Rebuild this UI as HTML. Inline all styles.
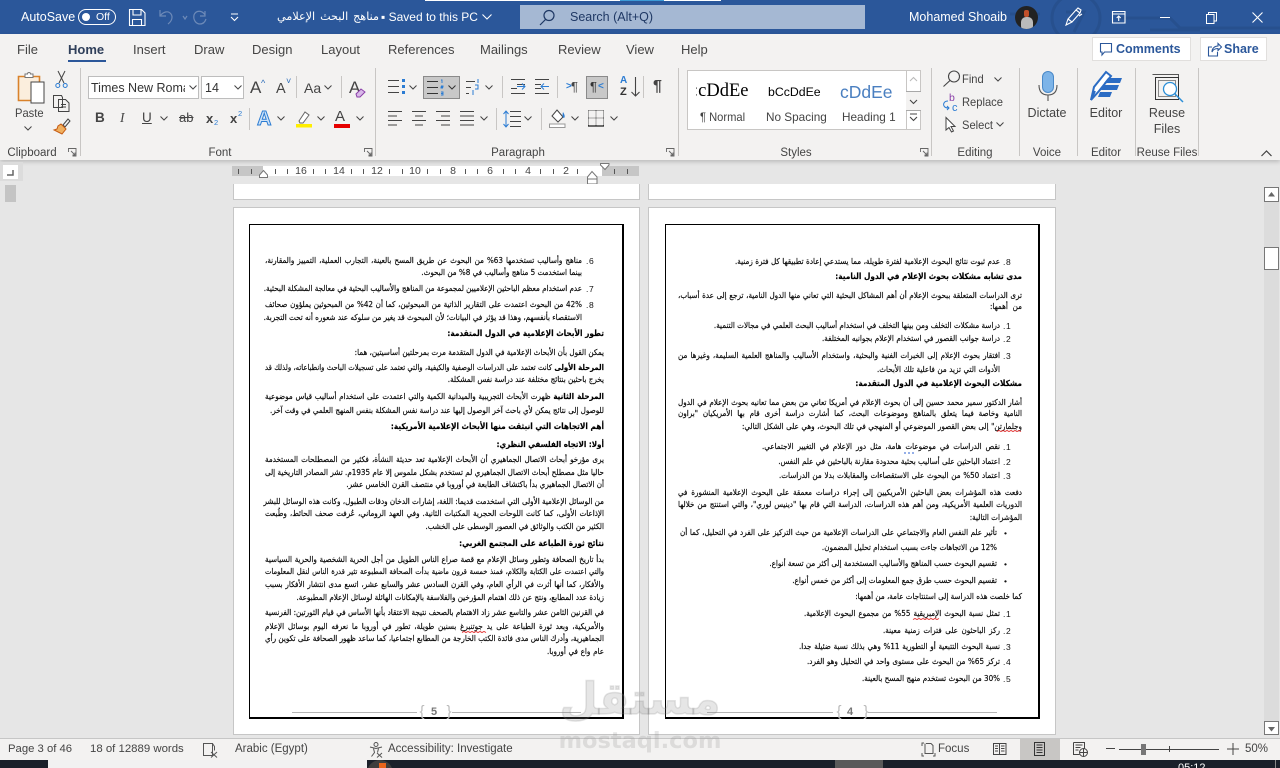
<!DOCTYPE html>
<html lang="en"><head><meta charset="utf-8"><title>Word</title>
<style>
html,body{margin:0;padding:0;width:1280px;height:768px;overflow:hidden;background:#e6e6e6;font-family:"Liberation Sans","DejaVu Sans",sans-serif}
div,span{position:absolute;box-sizing:border-box}
.t{white-space:nowrap;color:#444;font-size:12.5px;line-height:14px}
.nr{font-size:12px;transform:scaleX(.93);transform-origin:left center}
.c{transform:translateX(-50%)}
svg{position:absolute;overflow:visible}
.tab{top:42px;font-size:13px;color:#444;white-space:nowrap;line-height:15px}
.sep{width:1px;background:#c8c6c4}
.lbl{top:146px;font-size:11.5px;color:#444;line-height:14px;white-space:nowrap;transform:translateX(-50%)}
.l{direction:rtl;white-space:nowrap;text-align:justify;text-align-last:justify;font:7.2px/10px "DejaVu Sans",sans-serif;color:#000;height:10px;-webkit-text-stroke:.14px #000;transform:scaleY(1.12)}
.l b{font-weight:bold;color:#000}
.h{font-weight:bold;color:#000;font-size:7.4px}
.n{font:8.5px/10px "Liberation Sans",sans-serif;color:#111;white-space:nowrap;letter-spacing:.6px}
.page{background:#fff;border:1px solid #c6c6c6}
.fr{border:1px solid #000;border-right-width:2px;border-bottom-width:2px}
</style></head><body>

<!-- title bar -->
<div style="left:0;top:0;width:1280px;height:34px;background:#2b579a"></div>
<svg style="left:1030px;top:0" width="250" height="34"><g fill="none" stroke="#27508e" stroke-width="3"><circle cx="46" cy="18" r="24"/><path d="M36 12h18l-10 20M90 18h50l10 10h100M120 30h50M10 14h-30"/></g></svg>
<div style="left:425px;top:0;width:195px;height:1px;background:#fff"></div>
<div style="left:620px;top:0;width:44px;height:1px;background:#3c9ad6"></div>
<div style="left:664px;top:0;width:57px;height:1px;background:#fff"></div>
<div class="t" style="left:21px;top:10px;color:#fff;font-size:12.5px">AutoSave</div>
<div style="left:78px;top:9px;width:38px;height:16px;border:1.3px solid #fff;border-radius:8px"></div>
<div style="left:82px;top:13px;width:8px;height:8px;background:#fff;border-radius:50%"></div>
<div class="t" style="left:96px;top:10px;color:#fff;font-size:10.5px">Off</div>
<svg style="left:129px;top:9px" width="17" height="17" fill="none" stroke="#fff" stroke-width="1.1"><path d="M.5.5h12l3.5 3.5v12.500h-15.500zM4 .5v5.500h8v-5.500M3.500 16.500v-6h9v6"/></svg>
<svg style="left:159px;top:9px" width="50" height="17" fill="none" stroke="#6d8ab8" stroke-width="1.2"><path d="M1 1v6h6M1 7c3-4 8-6 11-2 2 3 1 7-3 10"/><path d="M37 7l2 3 2-3" transform="translate(-13 0)"/><path d="M46 2v5h-5M46 6c-3-5-9-5-11 0-1 5 2 9 6 9 3 0 5-2 6-5"/></svg>
<svg style="left:230px;top:13px" width="9" height="9" fill="none" stroke="#fff" stroke-width="1.1"><path d="M1 1h7M1 4l3.500 3.500L8 4"/></svg>
<div class="t" dir="rtl" style="left:277px;top:10px;width:102px;color:#fff;font:11.2px/14px 'DejaVu Sans',sans-serif;text-align-last:justify">مناهج البحث الإعلامي</div>
<div class="t" style="left:381px;top:10px;color:#fff;font-size:12px">▪ Saved to this PC</div>
<svg style="left:482px;top:14px" width="10" height="7" fill="none" stroke="#fff" stroke-width="1.1"><path d="M.5.500l4.500 4.500 4.500-4.500"/></svg>
<div style="left:520px;top:5px;width:345px;height:24px;background:#a5b8d3"></div>
<svg style="left:539px;top:9px" width="17" height="17" fill="none" stroke="#1f3864" stroke-width="1.2"><circle cx="10" cy="6.500" r="5"/><path d="M6.500 10.500L1 16"/></svg>
<div class="t" style="left:570px;top:10px;color:#1f3864;font-size:12.500px">Search (Alt+Q)</div>
<div class="t" style="left:909px;top:10px;color:#fff;font-size:12.500px">Mohamed Shoaib</div>
<div style="left:1015px;top:6px;width:23px;height:23px;border-radius:50%;background:#222;overflow:hidden"><div style="left:6px;top:11px;width:12px;height:14px;background:#bbb;border-radius:5px"></div><div style="left:9px;top:4px;width:5px;height:7px;background:#c2502a;border-radius:2px"></div></div>
<svg style="left:1065px;top:8px" width="18" height="19" fill="none" stroke="#fff" stroke-width="1.1"><path d="M1 17l2-6 8-9 4 3-8 9zM3 11l4 3M11 2l2-2 3 2-1 3M14 8l3-2"/></svg>
<svg style="left:1112px;top:11px" width="14" height="14" fill="none" stroke="#fff" stroke-width="1.1"><path d="M.500.500h12.500v11.500h-12.500zM.500 3h12.500M6.700 10V5M4.700 7l2-2 2 2"/></svg>
<div style="left:1160px;top:17px;width:10px;height:1px;background:#fff"></div>
<svg style="left:1206px;top:12px" width="11" height="12" fill="none" stroke="#fff" stroke-width="1"><path d="M.500 2.500h7.500v9h-7.500zM2.500 2.500v-2h8v8.500h-2.500"/></svg>
<svg style="left:1252px;top:12px" width="11" height="11" fill="none" stroke="#fff" stroke-width="1.1"><path d="M.500.500l10 10M10.500.500l-10 10"/></svg>

<!-- ribbon -->
<div style="left:0;top:34px;width:1280px;height:126px;background:#f3f2f1;box-shadow:0 2px 4px rgba(0,0,0,.18)"></div>
<div class="tab" style="left:17px">File</div>
<div class="tab" style="left:68px;font-weight:bold;color:#2f3f5a">Home</div>
<div style="left:68px;top:60px;width:38px;height:2px;background:#2b579a"></div>
<div class="tab" style="left:133px">Insert</div>
<div class="tab" style="left:194px">Draw</div>
<div class="tab" style="left:252px">Design</div>
<div class="tab" style="left:321px">Layout</div>
<div class="tab" style="left:388px">References</div>
<div class="tab" style="left:480px">Mailings</div>
<div class="tab" style="left:558px">Review</div>
<div class="tab" style="left:626px">View</div>
<div class="tab" style="left:681px">Help</div>

<div style="left:1092px;top:37px;width:99px;height:24px;background:#fff;border:1px solid #e1dfdd"></div>
<svg style="left:1100px;top:43px" width="14" height="14" fill="none" stroke="#2b579a" stroke-width="1.100"><path d="M.500.500h11v8.500h-7l-2.500 3v-3h-1.500z"/></svg>
<div class="t" style="left:1116px;top:42px;color:#2b579a;font-weight:bold;font-size:12.500px">Comments</div>
<div style="left:1200px;top:37px;width:67px;height:24px;background:#fff;border:1px solid #e1dfdd"></div>
<svg style="left:1208px;top:43px" width="14" height="14" fill="none" stroke="#2b579a" stroke-width="1.100"><path d="M4 4H.500v9h9v-4M4 9c0-4 3-6 6-6V.500l3.500 3.500L10 7.500V5.500c-3 0-5 1-6 3.500z"/></svg>
<div class="t" style="left:1224px;top:42px;color:#2b579a;font-weight:bold;font-size:12.500px">Share</div>

<div class="sep" style="left:80px;top:68px;height:88px"></div>
<div class="sep" style="left:375px;top:68px;height:88px"></div>
<div class="sep" style="left:678px;top:68px;height:88px"></div>
<div class="sep" style="left:931px;top:68px;height:88px"></div>
<div class="sep" style="left:1019px;top:68px;height:88px"></div>
<div class="sep" style="left:1077px;top:68px;height:88px"></div>
<div class="sep" style="left:1135px;top:68px;height:88px"></div>
<div class="sep" style="left:1198px;top:68px;height:88px"></div>

<!-- clipboard -->
<svg style="left:17px;top:71px" width="30" height="32" fill="none"><path d="M1.500 5.500h21v24h-21z" stroke="#d9822b" stroke-width="1.600" fill="#fbeedd"/><path d="M8 5V3h2.500a1.500 1.500 0 013 0H16v3.500H8z" stroke="#777" fill="#fff"/><path d="M14 12h13v21H14z" stroke="#444" fill="#fff" transform="translate(0 -1)"/></svg>
<div class="t nr" style="left:15px;top:106px">Paste</div>
<svg style="left:24px;top:126px" width="8" height="5" fill="none" stroke="#444"><path d="M.500.500L4 4 7.500.500"/></svg>
<svg style="left:55px;top:71px" width="13" height="18" fill="none" stroke="#444" stroke-width="1"><path d="M3 0l6 12M10 0L4 12"/><circle cx="2.800" cy="14.500" r="2" stroke="#2b7cd3"/><circle cx="10.200" cy="14.500" r="2" stroke="#2b7cd3"/></svg>
<svg style="left:53px;top:95px" width="17" height="17" fill="none" stroke="#444"><path d="M.500.500h8l1 2v10h-9zM5.500 4.500h7l3.500 3.500v8.500h-10.500zM8 9.500h5M8 12h5"/></svg>
<svg style="left:53px;top:118px" width="17" height="17" fill="none"><path d="M10 7l5-6 2 2-5 6z" stroke="#444"/><path d="M8 6l5 5-4 5-8-4 3-1 1-3z" fill="#f0b060" stroke="#c55a11"/></svg>
<div class="lbl" style="left:32px">Clipboard</div>
<svg style="left:68px;top:148px" width="9" height="9" fill="none" stroke="#666" stroke-width=".9"><path d="M.500 4V.500H8v7.500H4.500M3 3l4 4M4.500 7H7V4.500"/></svg>

<!-- font -->
<div style="left:88px;top:76px;width:111px;height:23px;background:#fff;border:1px solid #bdbdbd"></div>
<div style="left:201px;top:76px;width:43px;height:23px;background:#fff;border:1px solid #bdbdbd"></div>
<div class="t" style="left:91px;top:81px;width:94px;overflow:hidden;color:#333;font-size:12.500px">Times New Roma</div>
<div class="t" style="left:205px;top:81px;color:#333;font-size:12.500px">14</div>
<svg style="left:189px;top:85px" width="8" height="5" fill="none" stroke="#444"><path d="M.500.500L4 4 7.500.500"/></svg>
<svg style="left:234px;top:85px" width="8" height="5" fill="none" stroke="#444"><path d="M.500.500L4 4 7.500.500"/></svg>
<div class="t" style="left:250px;top:78px;font-size:17px;line-height:20px">A</div><div class="t" style="left:261px;top:76px;font-size:9px;color:#2b6cb8">^</div>
<div class="t" style="left:276px;top:80px;font-size:14.500px;line-height:18px">A</div><div class="t" style="left:286px;top:74px;font-size:9px;color:#2b6cb8">˅</div>
<div class="sep" style="left:296px;top:76px;height:22px"></div>
<div class="t" style="left:304px;top:80px;font-size:14px;line-height:16px">Aa</div>
<svg style="left:324px;top:85px" width="8" height="5" fill="none" stroke="#444"><path d="M.500.500L4 4 7.500.500"/></svg>
<div class="sep" style="left:341px;top:76px;height:22px"></div>
<div class="t" style="left:349px;top:78px;font-size:17px;line-height:20px">A</div>
<svg style="left:355px;top:88px" width="11" height="10"><path d="M1 6l5-5 4 3-5 5H2z" fill="#d8b8e8" stroke="#8a3fa8"/></svg>

<div class="t" style="left:95px;top:110px;font-weight:bold;font-size:13.500px;line-height:16px">B</div>
<div class="t" style="left:120px;top:110px;font-style:italic;font-size:13.500px;line-height:16px;font-family:'Liberation Serif',serif">I</div>
<div class="t" style="left:142px;top:110px;text-decoration:underline;font-size:13.500px;line-height:16px">U</div>
<svg style="left:160px;top:116px" width="8" height="5" fill="none" stroke="#444"><path d="M.500.500L4 4 7.500.500"/></svg>
<div class="t" style="left:179px;top:110px;font-size:13px;line-height:16px;text-decoration:line-through">ab</div>
<div class="t" style="left:206px;top:111px;font-size:13px;font-weight:bold;line-height:15px">x</div><div class="t" style="left:214px;top:119px;font-size:7.500px;line-height:8px;color:#2b7cd3">2</div>
<div class="t" style="left:230px;top:111px;font-size:13px;font-weight:bold;line-height:15px">x</div><div class="t" style="left:238px;top:110px;font-size:7.500px;line-height:8px;color:#2b7cd3">2</div>
<div class="sep" style="left:249px;top:108px;height:22px"></div>
<div class="t" style="left:257px;top:108px;font-size:20px;line-height:22px;font-weight:bold;color:#cfe3f7;-webkit-text-stroke:1px #2b7cd3">A</div>
<svg style="left:277px;top:116px" width="8" height="5" fill="none" stroke="#444"><path d="M.500.500L4 4 7.500.500"/></svg>
<svg style="left:296px;top:110px" width="16" height="17"><path d="M3 11l6-9 4 3-6 8H4z" fill="#fff" stroke="#666"/><path d="M0 14h16v3.500H0z" fill="#ffee00"/></svg>
<svg style="left:317px;top:116px" width="8" height="5" fill="none" stroke="#444"><path d="M.500.500L4 4 7.500.500"/></svg>
<div class="t" style="left:335px;top:109px;font-size:15px;line-height:16px">A</div><div style="left:334px;top:124px;width:16px;height:3.500px;background:#e60000"></div>
<svg style="left:356px;top:116px" width="8" height="5" fill="none" stroke="#444"><path d="M.500.500L4 4 7.500.500"/></svg>
<div class="lbl" style="left:220px">Font</div>
<svg style="left:364px;top:148px" width="9" height="9" fill="none" stroke="#666" stroke-width=".9"><path d="M.500 4V.500H8v7.500H4.500M3 3l4 4M4.500 7H7V4.500"/></svg>

<!-- paragraph -->
<svg style="left:388px;top:79px" width="18" height="16" stroke="#444" fill="none"><path d="M0 1.500h11M0 7.500h11M0 13.500h11"/><path d="M14 0h3v3h-3zM14 6h3v3h-3zM14 12h3v3h-3z" fill="#2b7cd3" stroke="none"/></svg>
<svg style="left:409px;top:85px" width="8" height="5" fill="none" stroke="#444"><path d="M.500.500L4 4 7.500.500"/></svg>
<div style="left:423px;top:76px;width:37px;height:23px;background:#c8c8c8;border:1px solid #8a8a8a"></div>
<svg style="left:427px;top:79px" width="17" height="17" stroke="#333" fill="none"><path d="M0 2.500h11M0 8.500h11M0 14.500h11"/><path d="M14 1h1v3M14 7h2v1h-2v1h2M14 13h2v3h-2M14 14.500h2" stroke="#2b7cd3" stroke-width=".9"/></svg>
<svg style="left:448px;top:85px" width="8" height="5" fill="none" stroke="#333"><path d="M.500.500L4 4 7.500.500"/></svg>
<svg style="left:466px;top:79px" width="16" height="17" stroke="#444" fill="none"><path d="M0 2.500h9M0 8.500h5M0 14.500h3"/><path d="M12 0v4M9 6h3v4H9M7 11v5" stroke="#2b7cd3"/></svg>
<svg style="left:485px;top:85px" width="8" height="5" fill="none" stroke="#444"><path d="M.500.500L4 4 7.500.500"/></svg>
<div class="sep" style="left:502px;top:76px;height:22px"></div>
<svg style="left:511px;top:79px" width="15" height="15" stroke="#444" fill="none"><path d="M0 .500h14M6 5.500h8M0 14.500h14M0 9.500h6"/><path d="M5 7.500h8M10 4.500l3 3-3 3" stroke="#2b7cd3" transform="translate(1 0)"/></svg>
<svg style="left:535px;top:79px" width="15" height="15" stroke="#444" fill="none"><path d="M0 .500h14M0 5.500h6M0 14.500h14M0 9.500h6"/><path d="M14 7.500H6M9 4.500l-3 3 3 3" stroke="#2b7cd3"/></svg>
<div class="sep" style="left:557px;top:76px;height:22px"></div>
<div class="t" style="left:571px;top:79px;font-size:13px;line-height:16px">¶</div><div class="t" style="left:566px;top:80px;font-size:10px;color:#2b7cd3;font-weight:bold">&gt;</div>
<div style="left:586px;top:76px;width:22px;height:23px;background:#c8c8c8;border:1px solid #8a8a8a"></div>
<div class="t" style="left:590px;top:79px;font-size:13px;line-height:16px;color:#333">¶</div><div class="t" style="left:598px;top:80px;font-size:10px;color:#2b7cd3;font-weight:bold">&lt;</div>
<div class="t" style="left:620px;top:76px;font-size:10px;line-height:10px;color:#2b7cd3;font-weight:bold">A</div><div class="t" style="left:620px;top:87px;font-size:11px;line-height:11px;color:#333;font-weight:bold">Z</div>
<svg style="left:631px;top:77px" width="9" height="20" fill="none" stroke="#444" stroke-width="1.100"><path d="M4.500 0v19M.500 15l4 4 4-4"/></svg>
<div class="sep" style="left:643px;top:76px;height:22px"></div>
<div class="t" style="left:653px;top:78px;font-size:16px;line-height:18px;font-weight:bold;color:#444">¶</div>

<svg style="left:388px;top:111px" width="90" height="15" stroke="#444" fill="none"><path d="M0 .500h14M0 5h9M0 9.500h14M0 14h9"/><path d="M24 .500h14M27 5h8M24 9.500h14M27 14h8"/><path d="M48 .500h14M53 5h9M48 9.500h14M53 14h9"/><path d="M72 .500h14M72 5h14M72 9.500h14M72 14h14"/></svg>
<svg style="left:480px;top:116px" width="8" height="5" fill="none" stroke="#444"><path d="M.500.500L4 4 7.500.500"/></svg>
<div class="sep" style="left:496px;top:108px;height:22px"></div>
<svg style="left:503px;top:110px" width="18" height="18" fill="none"><path d="M7 1.500h11M7 6.500h11M7 11.500h11M7 16.500h11" stroke="#444"/><path d="M3 1v16M.500 4L3 1l2.500 3M.500 14L3 17l2.500-3" stroke="#2b7cd3"/></svg>
<svg style="left:524px;top:116px" width="8" height="5" fill="none" stroke="#444"><path d="M.500.500L4 4 7.500.500"/></svg>
<div class="sep" style="left:541px;top:108px;height:22px"></div>
<svg style="left:549px;top:109px" width="17" height="19" fill="none"><path d="M8 1l6 7-5 5-6-6z" stroke="#444" fill="#fff"/><path d="M14 3c2 3 2 5 1 6-1 0-2-2-1-6z" fill="#2b7cd3"/><path d="M.500 15h15.500v3.500H.500z" stroke="#999" fill="#fff"/></svg>
<svg style="left:571px;top:116px" width="8" height="5" fill="none" stroke="#444"><path d="M.500.500L4 4 7.500.500"/></svg>
<svg style="left:588px;top:110px" width="16" height="17" fill="none"><path d="M.500.500h15M.500 8h15M8 .500v15M.500.500v15M15.500.500v15" stroke="#555" stroke-dasharray="1 1"/><path d="M0 16h16" stroke="#222" stroke-width="1.300"/></svg>
<svg style="left:610px;top:116px" width="8" height="5" fill="none" stroke="#444"><path d="M.500.500L4 4 7.500.500"/></svg>
<div class="lbl" style="left:518px">Paragraph</div>
<svg style="left:666px;top:148px" width="9" height="9" fill="none" stroke="#666" stroke-width=".9"><path d="M.500 4V.500H8v7.500H4.500M3 3l4 4M4.500 7H7V4.500"/></svg>

<!-- styles -->
<div style="left:687px;top:70px;width:234px;height:60px;background:#fff;border:1px solid #c8c6c4"></div>
<div style="left:906px;top:70px;width:15px;height:60px;border:1px solid #c8c6c4;background:#fff"></div>
<div style="left:906px;top:91px;width:15px;height:20px;border:1px solid #a8a8a8;border-width:1px 0;background:#f3f2f1"></div>
<svg style="left:909px;top:76px" width="9" height="48" fill="none" stroke-width="1.100"><path d="M1 5l3.500-3.500L8 5" stroke="#bbb"/><path d="M1 24l3.500 3.500L8 24M1 38h7M1 41l3.500 3.500L8 41" stroke="#444"/></svg>
<div style="left:696px;top:79px;width:54px;height:24px;overflow:hidden"><div class="t" style="left:-3px;top:2px;font:18.5px/20px 'Liberation Serif',serif;color:#000">:cDdEe</div></div>
<div class="t" style="left:768px;top:85px;font:12.300px/14px 'Liberation Sans',sans-serif;color:#000">bCcDdEe</div>
<div class="t" style="left:840px;top:81px;font:17.500px/22px 'Liberation Sans',sans-serif;color:#4a7fc0">cDdEe</div>
<div class="t nr" style="left:700px;top:110px">¶ Normal</div>
<div class="t nr" style="left:766px;top:110px;transform:scaleX(.98)">No Spacing</div>
<div class="t nr" style="left:842px;top:110px;transform:scaleX(.98)">Heading 1</div>
<div class="lbl" style="left:796px">Styles</div>
<svg style="left:920px;top:148px" width="9" height="9" fill="none" stroke="#666" stroke-width=".9"><path d="M.500 4V.500H8v7.500H4.500M3 3l4 4M4.500 7H7V4.500"/></svg>

<!-- editing -->
<svg style="left:943px;top:70px" width="18" height="17" fill="none" stroke="#444" stroke-width="1.100"><circle cx="11" cy="6.500" r="5.500"/><path d="M7 10.500L.500 16.500"/></svg>
<div class="t nr" style="left:962px;top:72px">Find</div>
<svg style="left:994px;top:77px" width="8" height="5" fill="none" stroke="#444"><path d="M.500.500L4 4 7.500.500"/></svg>
<svg style="left:942px;top:93px" width="17" height="18" fill="none"><path d="M6 8c-4 0-5 3-4 5 1 2 3 2 5 2M5 13l2 2-2 2" stroke="#2b7cd3"/></svg>
<div class="t" style="left:949px;top:93px;font-size:10.500px;line-height:11px;color:#8a3fa8">b</div>
<div class="t" style="left:952px;top:103px;font-size:11px;line-height:11px;color:#2b7cd3">c</div>
<div class="t nr" style="left:962px;top:95px">Replace</div>
<svg style="left:945px;top:117px" width="12" height="16" fill="#fff" stroke="#444"><path d="M1 .500v12.500l3-2.500 2.500 4.500 2-1-2.500-4.500h4z"/></svg>
<div class="t nr" style="left:962px;top:118px">Select</div>
<svg style="left:996px;top:122px" width="8" height="5" fill="none" stroke="#444"><path d="M.500.500L4 4 7.500.500"/></svg>
<div class="lbl" style="left:975px">Editing</div>

<!-- dictate -->
<div style="left:1042px;top:71px;width:12px;height:22px;border-radius:6px;background:#7db4e8;border:1px solid #4a89c8"></div>
<svg style="left:1038px;top:84px" width="20" height="18" fill="none" stroke="#555" stroke-width="1.100"><path d="M1 1c0 7 3 10 9 10s9-3 9-10M10 11v6"/></svg>
<div class="t c" style="left:1047px;top:106px">Dictate</div>
<div class="lbl" style="left:1047px">Voice</div>

<!-- editor -->
<svg style="left:1089px;top:70px" width="34" height="32" fill="none"><path d="M2 30L5 17 17 2l5 4L10 21z" stroke="#2b6cc4" stroke-width="2" fill="#fff"/><path d="M2 30l4-9" stroke="#2b6cc4" stroke-width="2"/><path d="M19 8h14l-2 5H15zM15 15h15l-2 5H12zM11 22h12l-2 5H9z" fill="#2b6cc4"/></svg>
<div class="t c" style="left:1106px;top:106px">Editor</div>
<div class="lbl" style="left:1106px">Editor</div>

<!-- reuse -->
<svg style="left:1152px;top:74px" width="33" height="30" fill="none"><path d="M.500.500h26v24" stroke="#555"/><path d="M3.500 3.500h23v22H3.500z" stroke="#333"/><path d="M6.500 6.500h17v16h-17z" stroke="#888"/><circle cx="18" cy="15" r="6.500" stroke="#2b8fd8" stroke-width="1.300" fill="#fff"/><path d="M23 20l8 8" stroke="#2b8fd8" stroke-width="1.500"/></svg>
<div class="t c" style="left:1167px;top:106px">Reuse</div>
<div class="t c" style="left:1167px;top:122px">Files</div>
<div class="lbl" style="left:1167px">Reuse Files</div>
<svg style="left:1261px;top:150px" width="11" height="7" fill="none" stroke="#444" stroke-width="1.200"><path d="M.500 6l5-5 5 5"/></svg>

<!-- left corner -->
<div style="left:0;top:162px;width:23px;height:19px;background:#dcdcdc"></div>
<div style="left:3px;top:165px;width:15px;height:14px;background:#fff"></div>
<svg style="left:7px;top:170px" width="7" height="6" fill="none" stroke="#666" stroke-width="1.500"><path d="M0 5h6V0"/></svg>
<div style="left:5px;top:185px;width:11px;height:17px;background:#c4c4c4"></div>

<!-- ruler -->
<div style="left:232px;top:166px;width:407px;height:10px;background:#c6c6c6"></div>
<div style="left:263px;top:166px;width:339px;height:10px;background:#fff"></div>
<svg style="left:232px;top:166px" width="407" height="10" stroke="#555"><path d="M6.500 3v5M19.500 3v5M43.500 3v5M55.500 3v5M81.500 3v5M93.500 3v5M119.500 3v5M131.500 3v5M157.500 3v5M170.500 3v5M195.500 3v5M208.500 3v5M233.500 3v5M245.500 3v5M271.500 3v5M283.500 3v5M308.500 3v5M321.500 3v5M345.500 3v5M382.500 3v5M395.500 3v5"/></svg>
<div class="t c" style="left:301px;top:165px;font-size:10.500px;line-height:12px">16</div>
<div class="t c" style="left:339px;top:165px;font-size:10.500px;line-height:12px">14</div>
<div class="t c" style="left:377px;top:165px;font-size:10.500px;line-height:12px">12</div>
<div class="t c" style="left:415px;top:165px;font-size:10.500px;line-height:12px">10</div>
<div class="t c" style="left:453px;top:165px;font-size:10.500px;line-height:12px">8</div>
<div class="t c" style="left:490px;top:165px;font-size:10.500px;line-height:12px">6</div>
<div class="t c" style="left:528px;top:165px;font-size:10.500px;line-height:12px">4</div>
<div class="t c" style="left:566px;top:165px;font-size:10.500px;line-height:12px">2</div>
<svg style="left:259px;top:170px" width="10" height="8" fill="#fff" stroke="#777"><path d="M.500 7.500V5l4-4.500 4 4.500v2.500z"/></svg>
<svg style="left:600px;top:163px" width="10" height="8" fill="#fff" stroke="#777"><path d="M.500.500h8.500v1.500l-4 4.500-4.500-4.500z"/></svg>
<svg style="left:587px;top:171px" width="11" height="14" fill="#fff" stroke="#777"><path d="M.500 6l4.500-5.500L10 6v2H.500zM.500 8h9.500v5H.500z"/></svg>

<!-- partial page -->
<div class="page" style="left:233px;top:184px;width:407px;height:16px;border-top:0"></div>
<div class="page" style="left:648px;top:184px;width:408px;height:16px;border-top:0"></div>

<!-- pages -->
<div class="page" style="left:233px;top:207px;width:407px;height:528px"></div>
<div class="page" style="left:648px;top:207px;width:408px;height:528px"></div>
<div class="fr" style="left:249px;top:224px;width:375px;height:495px"></div>
<div class="fr" style="left:665px;top:224px;width:375px;height:495px"></div>

<!-- page 5 -->
<div class="n" style="left:586px;top:256px">.6</div>
<div class="l" style="top:256px;left:265px;width:317px">مناهج وأساليب تستخدمها 63% من البحوث عن طريق المسح بالعينة، التجارب العملية، التمييز والمقارنة،</div>
<div class="l" style="top:268px;left:423px;width:159px">بينما استخدمت 5 مناهج وأساليب في 8% من البحوث.</div>
<div class="n" style="left:586px;top:284px">.7</div>
<div class="l" style="top:284px;left:275px;width:307px">عدم استخدام معظم الباحثين الإعلاميين لمجموعة من المناهج والأساليب البحثية في معالجة المشكلة البحثية.</div>
<div class="n" style="left:586px;top:300px">.8</div>
<div class="l" style="top:300px;left:265px;width:317px">42% من البحوث اعتمدت على التقارير الذاتية من المبحوثين، كما أن 42% من المبحوثين يملؤون صحائف</div>
<div class="l" style="top:313px;left:266px;width:316px">الاستقصاء بأنفسهم، وهذا قد يؤثر في البيانات؛ لأن المبحوث قد يغير من سلوكه عند شعوره أنه تحت التجربة.</div>
<div class="l h" style="top:329px;left:458px;width:146px">تطور الأبحاث الإعلامية في الدول المتقدمة:</div>
<div class="l" style="top:348px;left:360px;width:244px">يمكن القول بأن الأبحاث الإعلامية في الدول المتقدمة مرت بمرحلتين أساسيتين، هما:</div>
<div class="l" style="top:363px;left:265px;width:339px;font-size:6.900px"><b>المرحلة الأولى</b> كانت تعتمد على الدراسات الوصفية والكيفية، والتي تعتمد على تسجيلات الباحث وانطباعاته، ولذلك قد</div>
<div class="l" style="top:375px;left:453px;width:151px">يخرج باحثين بنتائج مختلفة عند دراسة نفس المشكلة.</div>
<div class="l" style="top:392px;left:265px;width:339px"><b>المرحلة الثانية</b> ظهرت الأبحاث التجريبية والميدانية الكمية والتي اعتمدت على استخدام أساليب قياس موضوعية</div>
<div class="l" style="top:406px;left:275px;width:329px">للوصول إلى نتائج يمكن لأي باحث آخر الوصول إليها عند دراسة نفس المشكلة بنفس المنهج العلمي في وقت آخر.</div>
<div class="l h" style="top:422px;left:402px;width:202px">أهم الاتجاهات التي انبثقت منها الأبحاث الإعلامية الأمريكية:</div>
<div class="l" style="top:440px;left:515px;width:89px"><b>أولا: الاتجاه الفلسفي النظري:</b></div>
<div class="l" style="top:455px;left:265px;width:339px">يرى مؤرخو أبحاث الاتصال الجماهيري أن الأبحاث الإعلامية تعد حديثة النشأة، فكثير من المصطلحات المستخدمة</div>
<div class="l" style="top:468px;left:265px;width:339px">حاليا مثل مصطلح أبحاث الاتصال الجماهيري لم تستخدم بشكل ملموس إلا عام 1935م. تشر المصادر التاريخية إلى</div>
<div class="l" style="top:480px;left:347px;width:257px">أن الاتصال الجماهيري بدأ باكتشاف الطابعة في أوروبا في منتصف القرن الخامس عشر.</div>
<div class="l" style="top:497px;left:265px;width:339px">من الوسائل الإعلامية الأولى التي استخدمت قديما: اللغة، إشارات الدخان ودقات الطبول، وكانت هذه الوسائل للبشر</div>
<div class="l" style="top:509px;left:265px;width:339px">الإذاعات الأولى، كما كانت اللوحات الحجرية المكتبات الثانية. وفي العهد الروماني، عُرفت صحف الحائط، وطُبعت</div>
<div class="l" style="top:522px;left:430px;width:174px">الكثير من الكتب والوثائق في العصور الوسطى على الخشب.</div>
<div class="l h" style="top:539px;left:465px;width:139px">نتائج ثورة الطباعة على المجتمع الغربي:</div>
<div class="l" style="top:555px;left:265px;width:339px">بدأ تاريخ الصحافة وتطور وسائل الإعلام مع قصة صراع الناس الطويل من أجل الحرية الشخصية والحرية السياسية</div>
<div class="l" style="top:567px;left:265px;width:339px;font-size:6.800px">والتي اعتمدت على الكتابة والكلام، فمنذ خمسة قرون ماضية بدأت الصحافة المطبوعة تثير قدرة الناس لنقل المعلومات</div>
<div class="l" style="top:580px;left:265px;width:339px">والأفكار، كما أنها أثرت في الرأي العام، وفي القرن السادس عشر والسابع عشر، اتسع مدى انتشار الأفكار بسبب</div>
<div class="l" style="top:593px;left:308px;width:296px">زيادة عدد المطابع، ونتج عن ذلك اهتمام المؤرخين والفلاسفة بالإمكانات الهائلة لوسائل الإعلام المطبوعة.</div>
<div class="l" style="top:608px;left:265px;width:339px">في القرنين الثامن عشر والتاسع عشر زاد الاهتمام بالصحف نتيجة الاعتقاد بأنها الأساس في قيام الثورتين: الفرنسية</div>
<div class="l" style="top:622px;left:265px;width:339px">والأمريكية، وبعد ثورة الطباعة على يد جوتنبرغ بسنين طويلة، تطور في أوروبا ما نعرفه اليوم بوسائل الإعلام</div>
<div class="l" style="top:634px;left:265px;width:339px">الجماهيرية، وأدرك الناس مدى فائدة الكتب الخارجة من المطابع اجتماعيا، كما ساعد ظهور الصحافة على تكوين رأي</div>
<div class="l" style="top:647px;left:547px;width:57px">عام واع في أوروبا.</div>
<svg style="left:462px;top:631px" width="30" height="3" fill="none" stroke="#e02020" stroke-width=".9"><path d="M0 1.500l2-1 2 1 2-1 2 1 2-1 2 1 2-1 2 1 2-1 2 1 2-1 2 1"/></svg>

<!-- page 4 -->
<div class="n" style="left:1003px;top:257px">.8</div>
<div class="l" style="top:257px;left:735px;width:265px">عدم ثبوت نتائج البحوث الإعلامية لفترة طويلة، مما يستدعي إعادة تطبيقها كل فترة زمنية.</div>
<div class="l h" style="top:272px;left:845px;width:177px">مدى تشابه مشكلات بحوث الإعلام في الدول النامية:</div>
<div class="l" style="top:291px;left:678px;width:344px">ترى الدراسات المتعلقة ببحوث الإعلام أن أهم المشاكل البحثية التي تعاني منها الدول النامية، ترجع إلى عدة أسباب،</div>
<div class="l" style="top:302px;left:990px;width:32px">من أهمها:</div>
<div class="n" style="left:1003px;top:321px">.1</div>
<div class="l" style="top:321px;left:723px;width:277px">دراسة مشكلات التخلف ومن بينها التخلف في استخدام أساليب البحث العلمي في مجالات التنمية.</div>
<div class="n" style="left:1003px;top:334px">.2</div>
<div class="l" style="top:334px;left:822px;width:178px">دراسة جوانب القصور في استخدام الإعلام بجوانبه المختلفة.</div>
<div class="n" style="left:1003px;top:351px">.3</div>
<div class="l" style="top:351px;left:678px;width:322px">افتقار بحوث الإعلام إلى الخبرات الفنية والبحثية، واستخدام الأساليب والمناهج العلمية السليمة، وغيرها من</div>
<div class="l" style="top:365px;left:877px;width:123px">الأدوات التي تزيد من فاعلية تلك الأبحاث.</div>
<div class="l h" style="top:379px;left:865px;width:157px">مشكلات البحوث الإعلامية في الدول المتقدمة:</div>
<div class="l" style="top:398px;left:678px;width:344px">أشار الدكتور سمير محمد حسين إلى أن بحوث الإعلام في أمريكا تعاني من بعض مما تعانيه بحوث الإعلام في الدول</div>
<div class="l" style="top:409px;left:678px;width:344px">النامية وخاصة فيما يتعلق بالمناهج وموضوعات البحث، كما أشارت دراسة أخرى قام بها الأمريكيان "براون</div>
<div class="l" style="top:422px;left:742px;width:280px">وجلمارتن" إلى بعض القصور الموضوعي أو المنهجي في تلك البحوث، وهي على الشكل التالي:</div>
<svg style="left:997px;top:430px" width="26" height="3" fill="none" stroke="#e02020" stroke-width=".9"><path d="M0 1.500l2-1 2 1 2-1 2 1 2-1 2 1 2-1 2 1 2-1 2 1 2-1 2 1"/></svg>
<div class="n" style="left:1003px;top:442px">.1</div>
<div class="l" style="top:442px;left:762px;width:238px">نقص الدراسات في موضوعات هامة، مثل دور الإعلام في التغيير الاجتماعي.</div>
<svg style="left:904px;top:452px" width="11" height="2" stroke="#2b5fd0" stroke-dasharray="2 2"><path d="M0 1h11"/></svg>
<div class="n" style="left:1003px;top:457px">.2</div>
<div class="l" style="top:457px;left:783px;width:217px">اعتماد الباحثين على أساليب بحثية محدودة مقارنة بالباحثين في علم النفس.</div>
<div class="n" style="left:1003px;top:471px">.3</div>
<div class="l" style="top:471px;left:779px;width:221px">اعتماد 50% من البحوث على الاستقصاءات والمقابلات بدلا من الدراسات.</div>
<div class="l" style="top:488px;left:678px;width:344px">دفعت هذه المؤشرات بعض الباحثين الأمريكيين إلى إجراء دراسات معمقة على البحوث الإعلامية المنشورة في</div>
<div class="l" style="top:500px;left:678px;width:344px">الدوريات العلمية الأمريكية، ومن أهم هذه الدراسات، الدراسة التي قام بها "دينيس لوري"، والتي استنتج من خلالها</div>
<div class="l" style="top:513px;left:970px;width:52px">المؤشرات التالية:</div>
<div class="n" style="left:1004px;top:528px">•</div>
<div class="l" style="top:528px;left:680px;width:317px">تأثير علم النفس العام والاجتماعي على الدراسات الإعلامية من حيث التركيز على الفرد في التحليل، كما أن</div>
<div class="l" style="top:543px;left:822px;width:175px">12% من الاتجاهات جاءت بسبب استخدام تحليل المضمون.</div>
<div class="n" style="left:1004px;top:559px">•</div>
<div class="l" style="top:559px;left:777px;width:220px">تقسيم البحوث حسب المناهج والأساليب المستخدمة إلى أكثر من تسعة أنواع.</div>
<div class="n" style="left:1004px;top:576px">•</div>
<div class="l" style="top:576px;left:798px;width:199px">تقسيم البحوث حسب طرق جمع المعلومات إلى أكثر من خمس أنواع.</div>
<div class="l" style="top:592px;left:857px;width:165px">كما خلصت هذه الدراسة إلى استنتاجات عامة، من أهمها:</div>
<div class="n" style="left:1003px;top:609px">.1</div>
<div class="l" style="top:609px;left:804px;width:196px">تمثل نسبة البحوث الإمبريقية 55% من مجموع البحوث الإعلامية.</div>
<svg style="left:913px;top:618px" width="30" height="3" fill="none" stroke="#e02020" stroke-width=".9"><path d="M0 1.500l2-1 2 1 2-1 2 1 2-1 2 1 2-1 2 1 2-1 2 1 2-1 2 1 2-1"/></svg>
<div class="n" style="left:1003px;top:626px">.2</div>
<div class="l" style="top:626px;left:883px;width:117px">ركز الباحثون على فترات زمنية معينة.</div>
<div class="n" style="left:1003px;top:642px">.3</div>
<div class="l" style="top:642px;left:799px;width:201px">نسبة البحوث التتبعية أو التطورية 11% وهي بذلك نسبة ضئيلة جدا.</div>
<div class="n" style="left:1003px;top:657px">.4</div>
<div class="l" style="top:657px;left:807px;width:193px">تركز 65% من البحوث على مستوى واحد في التحليل وهو الفرد.</div>
<div class="n" style="left:1003px;top:674px">.5</div>
<div class="l" style="top:674px;left:862px;width:138px">30% من البحوث تستخدم منهج المسح بالعينة.</div>

<!-- footers -->
<div style="left:292px;top:712px;width:125px;height:1px;background:#b5b5b5"></div>
<div style="left:452px;top:712px;width:129px;height:1px;background:#b5b5b5"></div>
<div class="t c" style="left:418px;top:704px;font-size:15px;line-height:16px;color:#bbb;margin-left:4px">{</div>
<div class="t c" style="left:434px;top:706px;font:bold 11px/13px 'Liberation Sans',sans-serif;color:#777">5</div>
<div class="t c" style="left:449px;top:704px;font-size:15px;line-height:16px;color:#bbb">}</div>
<div style="left:707px;top:712px;width:126px;height:1px;background:#b5b5b5"></div>
<div style="left:868px;top:712px;width:129px;height:1px;background:#b5b5b5"></div>
<div class="t c" style="left:835px;top:704px;font-size:15px;line-height:16px;color:#bbb;margin-left:4px">{</div>
<div class="t c" style="left:850px;top:706px;font:bold 11px/13px 'Liberation Sans',sans-serif;color:#777">4</div>
<div class="t c" style="left:866px;top:704px;font-size:15px;line-height:16px;color:#bbb">}</div>

<!-- scrollbar -->
<div style="left:1264px;top:187px;width:15px;height:548px;background:#dcdcdc"></div>
<div style="left:1264px;top:187px;width:15px;height:15px;background:#fff;border:1px solid #777"></div>
<svg style="left:1268px;top:192px" width="8" height="5"><path d="M0 4.500L3.500 0 7 4.500z" fill="#666"/></svg>
<div style="left:1264px;top:247px;width:15px;height:23px;background:#fff;border:1px solid #777"></div>
<div style="left:1264px;top:721px;width:15px;height:14px;background:#fff;border:1px solid #777"></div>
<svg style="left:1268px;top:727px" width="8" height="5"><path d="M0 0L3.500 4.500 7 0z" fill="#666"/></svg>

<!-- status -->
<div style="left:0;top:738px;width:1280px;height:22px;background:#f3f2f1;border-top:1px solid #c6c6c6"></div>
<div class="t" style="left:8px;top:742px;font-size:11.300px">Page 3 of 46</div>
<div class="t" style="left:90px;top:742px;font-size:11.400px">18 of 12889 words</div>
<svg style="left:203px;top:743px" width="15" height="15" fill="none" stroke="#555"><path d="M.500.500h9v12h-9zM9.500.500l2 3v4M8 9l6 5.500M14 9l-6 5.500"/></svg>
<div class="t" style="left:235px;top:742px;font-size:11.500px">Arabic (Egypt)</div>
<svg style="left:369px;top:742px" width="14" height="16" fill="none" stroke="#555"><circle cx="7" cy="2.500" r="2"/><path d="M1 5l6 1.500L13 5M4.500 6.500l1 4-3 4M9.500 6.500l-1 4M8 11l5 4.500M13 11l-5 4.500"/></svg>
<div class="t" style="left:388px;top:742px;font-size:11.500px">Accessibility: Investigate</div>
<svg style="left:921px;top:742px" width="15" height="15" fill="none" stroke="#555"><path d="M5 1.500h5l2 2v8H4v-10M1 4V1h2M1 11v3h2M14 11v3h-2"/></svg>
<div class="t" style="left:938px;top:742px;font-size:11.500px">Focus</div>
<svg style="left:993px;top:742px" width="14" height="14" fill="none" stroke="#444"><path d="M.500 1.500h6v11h-6zM6.500 1.500h6.500v11H6.500zM2 4h3M2 6.500h3M2 9h3M8 4h3.500M8 6.500h3.500M8 9h3.500"/></svg>
<div style="left:1020px;top:739px;width:40px;height:21px;background:#c8c6c4"></div>
<svg style="left:1034px;top:742px" width="12" height="14" fill="none" stroke="#333"><path d="M.500.500h10v13h-10zM2.500 3h6M2.500 5.500h6M2.500 8h6M2.500 10.500h6"/></svg>
<svg style="left:1073px;top:742px" width="15" height="15" fill="none" stroke="#444"><path d="M.500.500h11v6M.500.500v12h6M2.500 3h7M2.500 5.500h5M2.500 8h3"/><circle cx="10.500" cy="10.500" r="4"/><path d="M6.500 10.500h8M10.500 6.500v8"/></svg>
<div style="left:1106px;top:748px;width:9px;height:1px;background:#444"></div>
<div style="left:1119px;top:749px;width:100px;height:1px;background:#444"></div>
<div style="left:1169px;top:746px;width:1px;height:6px;background:#444"></div>
<div style="left:1141px;top:744px;width:5px;height:11px;background:#777"></div>
<svg style="left:1227px;top:743px" width="12" height="12" stroke="#444"><path d="M0 6h12M6 0v12"/></svg>
<div class="t" style="left:1245px;top:742px;font-size:11.500px">50%</div>

<!-- taskbar -->
<div style="left:0;top:760px;width:1280px;height:8px;background:#1a202a;overflow:hidden">
<div style="left:48px;top:0;width:319px;height:8px;background:#f1f1f1"></div>
<div style="left:367px;top:0;width:26px;height:26px;border-radius:50%;background:#3d3d3d"></div>
<div style="left:379px;top:3px;width:7px;height:6px;background:#e8641c"></div>
<div style="left:835px;top:0;width:48px;height:8px;background:#5a5a5a"></div>
<div class="t" style="left:1178px;top:1px;color:#fff;font-size:11px">05:12</div>
<div style="left:1275px;top:0;width:1px;height:8px;background:#888"></div>
</div>

<!-- watermark -->
<div class="t" dir="rtl" style="left:640px;top:672px;font:bold 44px/56px 'DejaVu Sans',sans-serif;color:rgba(130,130,130,.2);-webkit-text-stroke:1.500px rgba(130,130,130,.2);transform:translateX(-50%)">مستقل</div>
<div class="t" style="left:640px;top:729px;font:bold 22.500px/24px 'DejaVu Sans',sans-serif;color:rgba(130,130,130,.2);transform:translateX(-50%)">mostaql.com</div>

</body></html>
